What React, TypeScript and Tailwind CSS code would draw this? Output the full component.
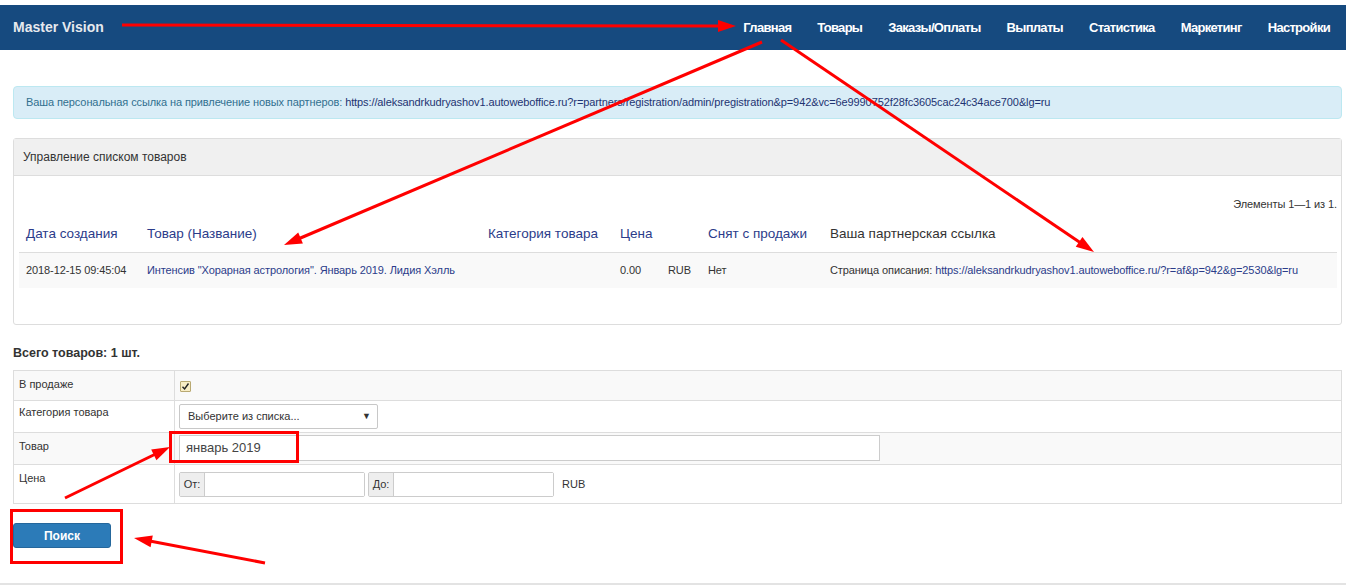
import React from "react";

const navItems = ["Главная", "Товары", "Заказы/Оплаты", "Выплаты", "Статистика", "Маркетинг", "Настройки"];

function Arrow({ x1, y1, x2, y2 }: { x1: number; y1: number; x2: number; y2: number }) {
  const dx = x2 - x1;
  const dy = y2 - y1;
  const len = Math.sqrt(dx * dx + dy * dy);
  const ux = dx / len;
  const uy = dy / len;
  const hl = 18;
  const hw = 6;
  const bx = x2 - ux * hl;
  const by = y2 - uy * hl;
  const px = -uy;
  const py = ux;
  return (
    <g>
      <line x1={x1} y1={y1} x2={bx + ux * 2} y2={by + uy * 2} stroke="#f00" strokeWidth={3} />
      <polygon
        points={`${x2},${y2} ${bx + px * hw},${by + py * hw} ${bx - px * hw},${by - py * hw}`}
        fill="#f00"
      />
    </g>
  );
}

export default function App() {
  return (
    <div className="relative w-[1346px] min-h-[587px] bg-white font-['Liberation_Sans',Arial,sans-serif] text-[#333] overflow-hidden">
      <div className="pt-[5px]">
        <div className="h-[45px] bg-[#164a7f] flex items-center justify-between pl-[13px] pr-[16px]">
          <div className="text-[14px] font-bold text-[#e6e9ee]">Master Vision</div>
          <div className="flex items-center gap-[26px]">
            {navItems.map((n) => (
              <span key={n} className="text-[13px] font-bold text-white tracking-[-0.7px]">
                {n}
              </span>
            ))}
          </div>
        </div>
      </div>

      <div className="pl-[13px] pr-[4px]">
        <div className="mt-[36px] h-[33px] border border-[#bce8f1] bg-[#d9edf7] rounded-[4px] flex items-center pl-[12px] text-[11px] tracking-[-0.1px]">
          <span className="text-[#31708f]">Ваша персональная ссылка на привлечение новых партнеров:&nbsp;</span>
          <span className="text-[#1e3472]">
            https://aleksandrkudryashov1.autoweboffice.ru?r=partners/registration/admin/pregistration&amp;p=942&amp;vc=6e9990752f28fc3605cac24c34ace700&amp;lg=ru
          </span>
        </div>

        <div className="mt-[19px] border border-[#dddddd] rounded-[3px]">
          <div className="h-[37px] bg-[#f0f0f0] border-b border-[#dddddd] flex items-center pl-[9px] text-[12px] text-[#333]">
            Управление списком товаров
          </div>
          <div className="pl-[5px] pr-[4px] pb-[36px]">
            <div className="pt-[20px] text-right text-[11px] leading-[16px] tracking-[-0.1px] text-[#333]">Элементы 1—1 из 1.</div>
            <div className="grid grid-cols-[121px_341px_132px_48px_40px_122px_1fr] h-[41px] items-end border-b border-[#dddddd] text-[13.5px] leading-[18px] pb-[9px]">
              <div className="pl-[7px] text-[#2b3c8a]">Дата создания</div>
              <div className="pl-[7px] text-[#2b3c8a]">Товар (Название)</div>
              <div className="pl-[7px] text-[#2b3c8a]">Категория товара</div>
              <div className="pl-[7px] text-[#2b3c8a] col-span-2">Цена</div>
              <div className="pl-[7px] text-[#2b3c8a]">Снят с продажи</div>
              <div className="pl-[7px] text-[#333]">Ваша партнерская ссылка</div>
            </div>
            <div className="grid grid-cols-[121px_341px_132px_48px_40px_122px_1fr] h-[35px] items-center bg-[#f9f9f9] text-[11px] tracking-[-0.1px]">
              <div className="pl-[7px]">2018-12-15 09:45:04</div>
              <div className="pl-[7px] text-[#2b3c8a]">Интенсив "Хорарная астрология". Январь 2019. Лидия Хэлль</div>
              <div className="pl-[7px]"></div>
              <div className="pl-[7px]">0.00</div>
              <div className="pl-[7px]">RUB</div>
              <div className="pl-[7px]">Нет</div>
              <div className="pl-[7px]">
                Страница описания: <span className="text-[#2b3c8a]">https://aleksandrkudryashov1.autoweboffice.ru/?r=af&amp;p=942&amp;g=2530&amp;lg=ru</span>
              </div>
            </div>
          </div>
        </div>

        <div className="mt-[20px] text-[12.5px] font-bold leading-[17px] text-[#333]">Всего товаров: 1 шт.</div>

        <div className="mt-[8px] border border-[#dddddd] text-[11px]">
          <div className="flex h-[30px] bg-[#f9f9f9] border-b border-[#dddddd]">
            <div className="w-[161px] border-r border-[#dddddd] pl-[5px] pt-[5px] leading-[16px]">В продаже</div>
            <div className="pl-[5px] pt-[10px]">
              <div className="w-[11px] h-[11px] border border-[#b9a972] bg-[#f8edc6] rounded-[1px] flex items-center justify-center">
                <svg width="9" height="9" viewBox="0 0 9 9">
                  <path d="M1.5 4.8 L3.6 7 L7.5 1.5" stroke="#222" strokeWidth="1.4" fill="none" />
                </svg>
              </div>
            </div>
          </div>
          <div className="flex h-[32px] bg-white border-b border-[#dddddd]">
            <div className="w-[161px] border-r border-[#dddddd] pl-[5px] pt-[3px] leading-[16px]">Категория товара</div>
            <div className="pl-[4px] pt-[3px]">
              <div className="w-[199px] h-[25px] border border-[#c8c8c8] rounded-[2px] bg-white flex items-center justify-between pl-[8px] pr-[6px]">
                <span className="text-[#333]">Выберите из списка...</span>
                <span className="text-[9px] text-[#333]">▼</span>
              </div>
            </div>
          </div>
          <div className="flex h-[32px] bg-[#f9f9f9] border-b border-[#dddddd]">
            <div className="w-[161px] border-r border-[#dddddd] pl-[5px] pt-[5px] leading-[16px]">Товар</div>
            <div className="pl-[4px] pt-[2px]">
              <div className="w-[701px] h-[26px] border border-[#cccccc] bg-white flex items-center pl-[6px] text-[13px] text-[#444]">
                январь 2019
              </div>
            </div>
          </div>
          <div className="flex h-[38px] bg-white">
            <div className="w-[161px] border-r border-[#dddddd] pl-[5px] pt-[5px] leading-[16px]">Цена</div>
            <div className="pl-[4px] pt-[7px] flex items-start">
              <div className="flex h-[25px] w-[186px] border border-[#cccccc] rounded-[2px]">
                <div className="w-[25px] bg-[#eeeeee] border-r border-[#cccccc] flex items-center justify-center text-[11px]">От:</div>
                <div className="flex-1 bg-white"></div>
              </div>
              <div className="ml-[3px] flex h-[25px] w-[186px] border border-[#cccccc] rounded-[2px]">
                <div className="w-[25px] bg-[#eeeeee] border-r border-[#cccccc] flex items-center justify-center text-[11px]">До:</div>
                <div className="flex-1 bg-white"></div>
              </div>
              <div className="ml-[8px] h-[25px] flex items-center text-[11px]">RUB</div>
            </div>
          </div>
        </div>

        <div className="mt-[19px]">
          <div className="w-[98px] h-[25px] bg-[#2c7bb8] border border-[#25679c] rounded-[3px] flex items-center justify-center text-white text-[12px] font-bold">
            Поиск
          </div>
        </div>
      </div>

      <div className="mt-[35px] border-t-2 border-[#e3e3e3]"></div>

      <svg className="absolute inset-0 pointer-events-none" width="1346" height="587">
        <Arrow x1={122} y1={25} x2={736} y2={26} />
        <Arrow x1={762} y1={42} x2={284} y2={245} />
        <Arrow x1={781} y1={40} x2={1094} y2={252} />
        <Arrow x1={65} y1={498} x2={170} y2={447} />
        <Arrow x1={265} y1={563} x2={134} y2={538} />
        <rect x={170.5} y={432.5} width={127} height={29} fill="none" stroke="#f00" strokeWidth={3} />
        <rect x={11.5} y={510.5} width={110} height={52} fill="none" stroke="#f00" strokeWidth={3} />
      </svg>
    </div>
  );
}
